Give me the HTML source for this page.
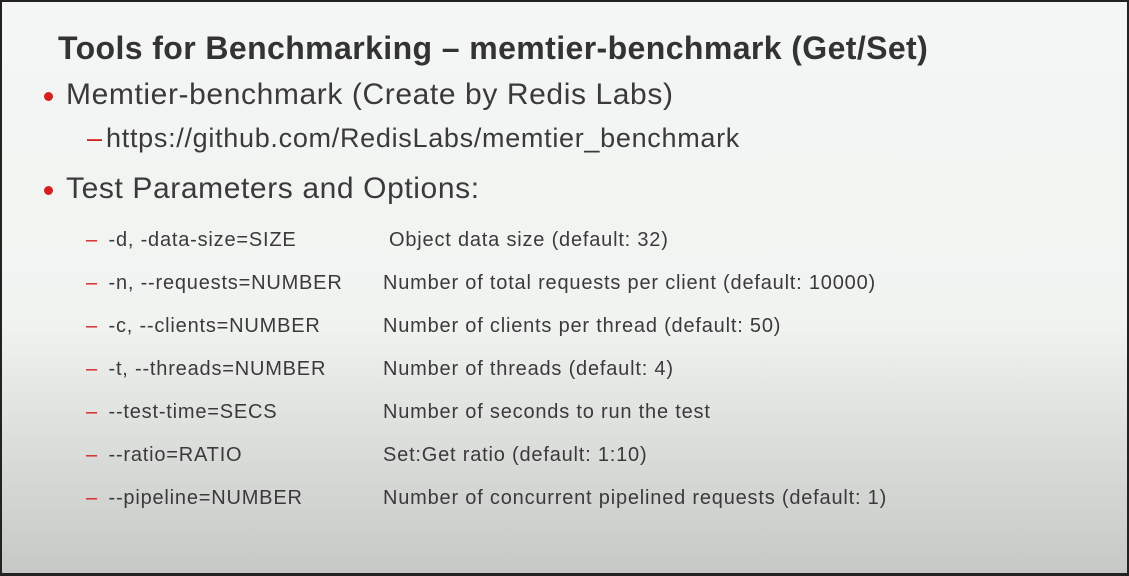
<!DOCTYPE html><html><head><style>
html,body{margin:0;padding:0}
body{width:1129px;height:576px;overflow:hidden;font-family:"Liberation Sans",sans-serif;color:#3a3a3a}
.s{position:absolute;left:0;top:0;width:1125px;height:571px;border:2px solid #222;border-bottom:3px solid #222;background:linear-gradient(#f3f6f4 0,#f1f3f1 320px,#dcdedc 440px,#c6c8c6 572px);}
.t{position:absolute;white-space:nowrap}
.r{color:#d02020}
.b{position:absolute;left:-22px;top:7px;width:9px;height:9px;border-radius:50%;background:#d42020}
</style></head><body><div class="s"></div>
<div class="t" style="left:58px;top:30px;font-size:32px;letter-spacing:0.4px;font-weight:bold;color:#333">Tools for Benchmarking – memtier-benchmark (Get/Set)</div>
<div class="t" style="left:66px;top:78px;font-size:30px;letter-spacing:0.6px"><span class="b" style="top:14px"></span>Memtier-benchmark (Create by Redis Labs)</div>
<div class="t" style="left:87px;top:123px;font-size:27px;letter-spacing:0.7px"><span class="r" style="letter-spacing:4px">–</span>https://github.com/RedisLabs/memtier_benchmark</div>
<div class="t" style="left:66px;top:172px;font-size:30px;letter-spacing:0.6px"><span class="b" style="top:14px"></span>Test Parameters and Options:</div>
<div style="position:absolute;left:86px;top:219px;font-size:20px;letter-spacing:0.8px;line-height:43px">
<div><span class="r" style="letter-spacing:5px">–</span> -d, -data-size=SIZE<span class="t" style="left:303px">Object data size (default: 32)</span></div>
<div><span class="r" style="letter-spacing:5px">–</span> -n, --requests=NUMBER<span class="t" style="left:297px">Number of total requests per client (default: 10000)</span></div>
<div><span class="r" style="letter-spacing:5px">–</span> -c, --clients=NUMBER<span class="t" style="left:297px">Number of clients per thread (default: 50)</span></div>
<div><span class="r" style="letter-spacing:5px">–</span> -t, --threads=NUMBER<span class="t" style="left:297px">Number of threads (default: 4)</span></div>
<div><span class="r" style="letter-spacing:5px">–</span> --test-time=SECS<span class="t" style="left:297px">Number of seconds to run the test</span></div>
<div><span class="r" style="letter-spacing:5px">–</span> --ratio=RATIO<span class="t" style="left:297px">Set:Get ratio (default: 1:10)</span></div>
<div><span class="r" style="letter-spacing:5px">–</span> --pipeline=NUMBER<span class="t" style="left:297px">Number of concurrent pipelined requests (default: 1)</span></div>
</div>
</body></html>
